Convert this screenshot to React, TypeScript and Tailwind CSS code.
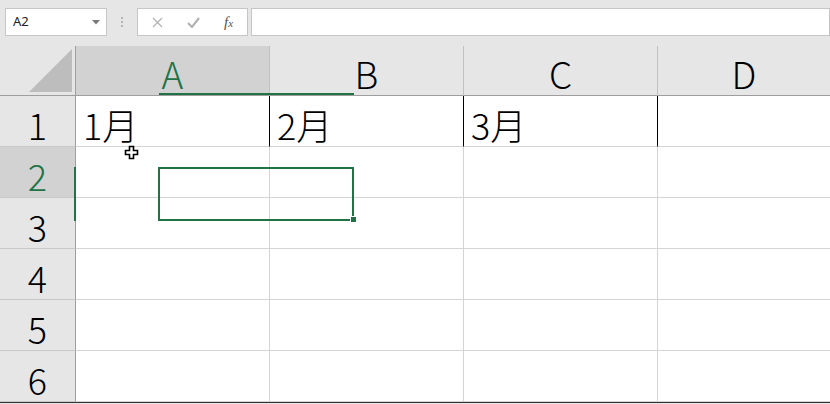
import React from 'react';

const cols = ['A', 'B', 'C', 'D'];
const rows = [1, 2, 3, 4, 5, 6];
const cellText: Record<string, string> = { A1: '1月', B1: '2月', C1: '3月' };

const gridFont = { fontFamily: '"Noto Sans CJK JP", "Noto Sans", sans-serif' };

function Cursor() {
  return (
    <svg width="16" height="16" viewBox="0 0 16 16" className="absolute left-[124px] top-[145px]">
      <path
        d="M5.5 1.5h4v4h4v4h-4v4h-4v-4h-4v-4h4z"
        fill="#fff"
        stroke="#000"
        strokeWidth="1.6"
        strokeLinejoin="miter"
      />
    </svg>
  );
}

export default function App() {
  return (
    <div className="relative w-[830px] h-[404px] overflow-hidden bg-[#e6e6e6] select-none">
      {/* 编辑栏 */}
      <div className="h-[46px] flex items-start pt-2 pl-[5px]" style={{ fontFamily: '"Segoe UI", "Noto Sans", sans-serif' }}>
        <div className="w-[102px] h-[28px] bg-white border border-[#c6c6c6] flex items-center justify-between pl-[7px] pr-[6px]">
          <span className="text-[13px] text-[#222]">A2</span>
          <svg width="8" height="5" viewBox="0 0 8 5">
            <path d="M0 0h8L4 4.5z" fill="#7a7a7a" />
          </svg>
        </div>
        <div className="w-[30px] h-[28px] flex flex-col items-center justify-center gap-[2px]">
          <span className="w-[2px] h-[2px] bg-[#b5b5b5]" />
          <span className="w-[2px] h-[2px] bg-[#b5b5b5]" />
          <span className="w-[2px] h-[2px] bg-[#b5b5b5]" />
        </div>
        <div className="w-[111px] h-[28px] bg-white border border-[#c6c6c6] flex items-center pl-[14px] gap-[24px]">
          <svg width="11" height="11" viewBox="0 0 11 11">
            <path d="M1 1l9 9M10 1l-9 9" stroke="#b3b3b3" strokeWidth="1.3" />
          </svg>
          <svg width="13" height="11" viewBox="0 0 13 11">
            <path d="M1 6l4 4 7-9" stroke="#b3b3b3" strokeWidth="2.2" fill="none" />
          </svg>
          <span className="text-[15px] italic text-[#555]" style={{ fontFamily: '"Liberation Serif", serif' }}>
            f<span className="text-[11px]">x</span>
          </span>
        </div>
        <div className="ml-[3px] flex-1 h-[28px] bg-white border border-[#c6c6c6]" />
      </div>

      {/* 表格 */}
      <div className="grid grid-cols-[76px_194px_194px_194px_1fr] bg-white font-light" style={gridFont}>
        <div className="h-[50px] bg-[#e6e6e6] border-r border-b border-[#9e9e9e] flex items-end justify-end pr-[3px] pb-[3px]">
          <svg width="43" height="43" viewBox="0 0 43 43">
            <path d="M43 0V43H0z" fill="#bdbdbd" />
          </svg>
        </div>
        {cols.map((c) => (
          <div
            key={c}
            className={`h-[50px] border-b border-[#9e9e9e] flex items-end justify-center pb-[3px] text-[37px] leading-none ${
              c === 'A' ? 'bg-[#d2d2d2] text-[#217346]' : 'bg-[#e6e6e6] text-black'
            } ${c === 'D' ? '' : 'border-r border-r-[#c0c0c0]'}`}
          >
            {c}
          </div>
        ))}
        {rows.map((r) => (
          <React.Fragment key={r}>
            <div
              className={`h-[51px] border-r border-r-[#9e9e9e] border-b border-b-[#c8c8c8] flex items-end justify-center pb-[4px] text-[36px] leading-none ${
                r === 2 ? 'bg-[#d2d2d2] text-[#217346]' : 'bg-[#e6e6e6] text-black'
              }`}
            >
              {r}
            </div>
            {cols.map((c) => (
              <div
                key={c}
                className={`h-[51px] border-b border-b-[#d4d4d4] flex items-end pl-[7px] pb-[4px] text-[36px] leading-none text-black ${
                  c === 'D' ? '' : r === 1 ? 'border-r border-r-black' : 'border-r border-r-[#d4d4d4]'
                }`}
              >
                {cellText[`${c}${r}`] ?? ''}
              </div>
            ))}
          </React.Fragment>
        ))}
      </div>
      <div className="h-[1px] bg-[#333]" />
      <div className="h-[1px] bg-[#e6e6e6]" />

      {/* 选中效果 */}
      <div className="absolute left-[159px] top-[93px] w-[195px] h-[2px] bg-[#217346]" />
      <div className="absolute left-[74px] top-[167px] w-[2px] h-[54px] bg-[#217346]" />
      <div className="absolute left-[158px] top-[167px] w-[196px] h-[54px] border-2 border-[#217346]" />
      <div className="absolute left-[350px] top-[216px] w-[7px] h-[7px] bg-[#217346] border border-white" />
      <Cursor />
    </div>
  );
}
